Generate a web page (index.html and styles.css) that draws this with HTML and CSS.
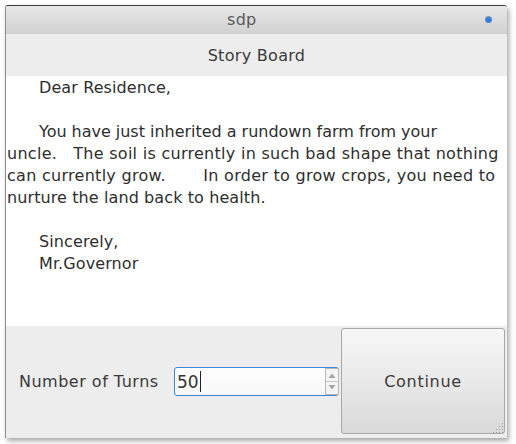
FILE: index.html
```html
<!DOCTYPE html>
<html>
<head>
<meta charset="utf-8">
<link rel="stylesheet" href="styles.css">
</head>
<body>
<div class="window">
  <div class="titlebar">
    <span class="title">sdp</span>
    <span class="dot"></span>
  </div>
  <div class="header">Story Board</div>
  <div class="story">
    <p class="line indent">Dear Residence,</p>
    <p class="line">&nbsp;</p>
    <p class="line indent tight">You have just inherited a rundown farm from your</p>
    <p class="line wide">uncle.&nbsp;&nbsp; The soil is currently in such bad shape that nothing</p>
    <p class="line wide">can currently grow.&nbsp;&nbsp;&nbsp;&nbsp;&nbsp;&nbsp; In order to grow crops, you need to</p>
    <p class="line">nurture the land back to health.</p>
    <p class="line">&nbsp;</p>
    <p class="line indent">Sincerely,</p>
    <p class="line indent">Mr.Governor</p>
  </div>
  <div class="bottom">
    <div class="turns">
      <span class="label">Number of Turns</span>
      <div class="spin">
        <span class="value">50</span><span class="caret"></span>
        <div class="arrows">
          <svg width="14" height="27" viewBox="0 0 14 27">
            <rect x="0.5" y="0.5" width="13" height="26" fill="#f4f4f4" stroke="#b9b9b9"/>
            <line x1="1" y1="13.5" x2="13" y2="13.5" stroke="#c8c8c8"/>
            <path d="M3.5 10 L7 5.5 L10.5 10 Z" fill="#a4a4a4"/>
            <path d="M3.5 17 L7 21.5 L10.5 17 Z" fill="#a4a4a4"/>
          </svg>
        </div>
      </div>
    </div>
    <div class="button">Continue
      <svg class="grip" width="14" height="14" viewBox="0 0 14 14">
        <g fill="#9a9a9a">
          <rect x="11" y="3" width="1" height="1"/>
          <rect x="8" y="6" width="1" height="1"/><rect x="11" y="6" width="1" height="1"/>
          <rect x="5" y="9" width="1" height="1"/><rect x="8" y="9" width="1" height="1"/><rect x="11" y="9" width="1" height="1"/>
          <rect x="2" y="12" width="1" height="1"/><rect x="5" y="12" width="1" height="1"/><rect x="8" y="12" width="1" height="1"/><rect x="11" y="12" width="1" height="1"/>
        </g>
      </svg>
    </div>
  </div>
</div>
</body>
</html>
```
FILE: styles.css
```css
html, body {
  margin: 0;
  padding: 0;
  background: #ffffff;
}
body {
  padding: 5px 0 0 5px;
  width: 516px;
  height: 444px;
  box-sizing: border-box;
  overflow: hidden;
  font-family: "DejaVu Sans", sans-serif;
}
.window {
  width: 502px;
  height: 433px;
  display: flex;
  flex-direction: column;
  border-left: 1px solid #8e8e8e;
  border-top: 1px solid #3a3a3a;
  border-radius: 3px 3px 0 0;
  box-shadow: 2px 3px 5px rgba(0,0,0,0.35);
  background: #ededed;
  overflow: hidden;
  box-sizing: border-box;
}
.titlebar {
  height: 27px;
  flex: none;
  display: flex;
  align-items: center;
  padding-left: 221px;
  position: relative;
  background: linear-gradient(#e8e8e8, #dcdcdc 50%, #d2d2d2);
  border-bottom: 1px solid #cfcfcf;
}
.title {
  color: #5a5a5a;
  font-size: 16px;
  letter-spacing: 0.3px;
}
.dot {
  position: absolute;
  right: 15px;
  top: 10px;
  width: 7px;
  height: 7px;
  border-radius: 50%;
  background: radial-gradient(circle at 50% 60%, #2f7de8 35%, #6a8fb8 65%, #aeb6bf);
}
.header {
  height: 42px;
  flex: none;
  display: flex;
  align-items: center;
  justify-content: center;
  font-size: 16px;
  color: #3a3a3a;
  background: #ededed;
  letter-spacing: 0.3px;
}
.story {
  flex: none;
  height: 250px;
  background: #ffffff;
  padding: 1px 0 0 1px;
  box-sizing: border-box;
  color: #2e2e2e;
  font-size: 16px;
}
.line {
  margin: 0;
  line-height: 22px;
  height: 22px;
  white-space: nowrap;
  letter-spacing: 0.1px;
}
.line.tight {
  letter-spacing: -0.02px;
}
.line.wide {
  letter-spacing: 0.28px;
}
.indent {
  padding-left: 32px;
}
.bottom {
  flex: 1;
  display: flex;
  align-items: stretch;
  padding: 2px 2px 4px 0;
  background: #ededed;
}
.turns {
  flex: 1;
  display: flex;
  align-items: center;
  padding-left: 13px;
  padding-top: 1px;
}
.label {
  font-size: 16px;
  color: #3a3a3a;
  width: 155px;
  letter-spacing: 0.5px;
}
.spin {
  width: 165px;
  height: 29px;
  margin-left: 0;
  box-sizing: border-box;
  border: 1px solid #3b86d6;
  border-radius: 3px;
  background: linear-gradient(#ffffff, #f7f7f7);
  display: flex;
  align-items: center;
  padding-left: 2px;
  position: relative;
  font-size: 17px;
  color: #333;
}
.caret {
  width: 1px;
  height: 21px;
  background: #222;
  margin-left: 1px;
}
.arrows {
  position: absolute;
  right: -1px;
  top: 0;
  height: 27px;
  display: flex;
}
.button {
  width: 164px;
  flex: none;
  box-sizing: border-box;
  border: 1px solid #a9a9a9;
  border-radius: 3px;
  background: linear-gradient(#f7f7f7, #e9e9e9 50%, #d9d9d9);
  display: flex;
  align-items: center;
  justify-content: center;
  font-size: 16px;
  color: #3a3a3a;
  letter-spacing: 0.7px;
  position: relative;
}
.grip {
  position: absolute;
  right: -1px;
  bottom: -1px;
}
```
